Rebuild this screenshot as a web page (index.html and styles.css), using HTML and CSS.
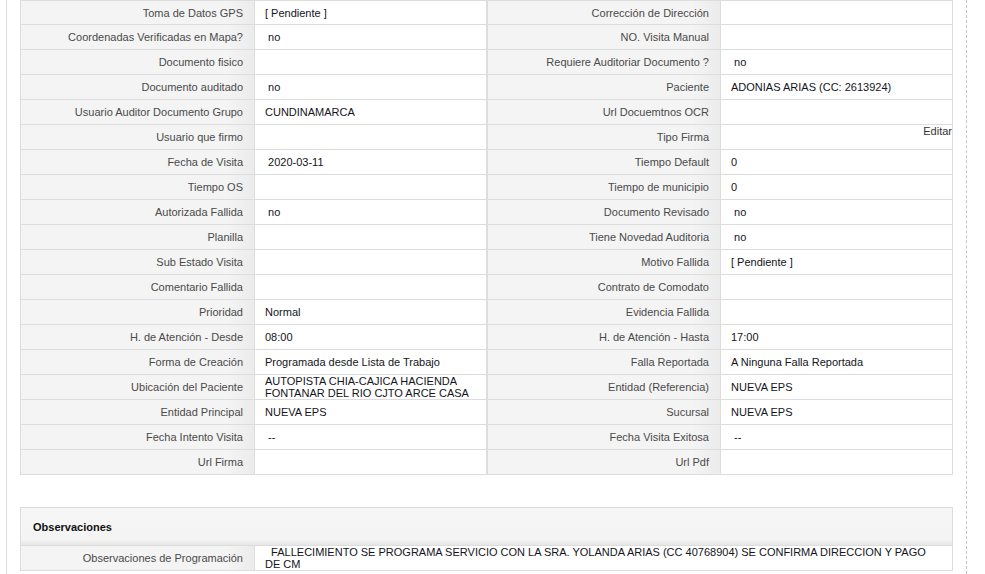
FILE: index.html
```html
<!doctype html>
<html>
	<head>
		<title>Detalle de Visita</title>
		<link rel="stylesheet" href="styles.css">
	</head>

	<body>
		<div class="page">
			<div class="details">
				<div class="label">Toma de Datos GPS</div>
				<div class="value">[ Pendiente ]</div>
				<div class="label">Corrección de Dirección</div>
				<div class="value"></div>

				<div class="label">Coordenadas Verificadas en Mapa?</div>
				<div class="value">&nbsp;no</div>
				<div class="label">NO. Visita Manual</div>
				<div class="value"></div>

				<div class="label">Documento fisico</div>
				<div class="value"></div>
				<div class="label">Requiere Auditoriar Documento ?</div>
				<div class="value">&nbsp;no</div>

				<div class="label">Documento auditado</div>
				<div class="value">&nbsp;no</div>
				<div class="label">Paciente</div>
				<div class="value">ADONIAS ARIAS (CC: 2613924)</div>

				<div class="label">Usuario Auditor Documento Grupo</div>
				<div class="value">CUNDINAMARCA</div>
				<div class="label">Url Docuemtnos OCR</div>
				<div class="value"></div>

				<div class="label">Usuario que firmo</div>
				<div class="value"></div>
				<div class="label">Tipo Firma</div>
				<div class="value value-edit"><a class="edit-link">Editar</a></div>

				<div class="label">Fecha de Visita</div>
				<div class="value">&nbsp;2020-03-11</div>
				<div class="label">Tiempo Default</div>
				<div class="value">0</div>

				<div class="label">Tiempo OS</div>
				<div class="value"></div>
				<div class="label">Tiempo de municipio</div>
				<div class="value">0</div>

				<div class="label">Autorizada Fallida</div>
				<div class="value">&nbsp;no</div>
				<div class="label">Documento Revisado</div>
				<div class="value">&nbsp;no</div>

				<div class="label">Planilla</div>
				<div class="value"></div>
				<div class="label">Tiene Novedad Auditoria</div>
				<div class="value">&nbsp;no</div>

				<div class="label">Sub Estado Visita</div>
				<div class="value"></div>
				<div class="label">Motivo Fallida</div>
				<div class="value">[ Pendiente ]</div>

				<div class="label">Comentario Fallida</div>
				<div class="value"></div>
				<div class="label">Contrato de Comodato</div>
				<div class="value"></div>

				<div class="label">Prioridad</div>
				<div class="value">Normal</div>
				<div class="label">Evidencia Fallida</div>
				<div class="value"></div>

				<div class="label">H. de Atención - Desde</div>
				<div class="value">08:00</div>
				<div class="label">H. de Atención - Hasta</div>
				<div class="value">17:00</div>

				<div class="label">Forma de Creación</div>
				<div class="value">Programada desde Lista de Trabajo</div>
				<div class="label">Falla Reportada</div>
				<div class="value">A Ninguna Falla Reportada</div>

				<div class="label">Ubicación del Paciente</div>
				<div class="value value-multi">AUTOPISTA CHIA-CAJICA HACIENDA FONTANAR DEL RIO CJTO ARCE CASA</div>
				<div class="label">Entidad (Referencia)</div>
				<div class="value">NUEVA EPS</div>

				<div class="label">Entidad Principal</div>
				<div class="value">NUEVA EPS</div>
				<div class="label">Sucursal</div>
				<div class="value">NUEVA EPS</div>

				<div class="label">Fecha Intento Visita</div>
				<div class="value">&nbsp;--</div>
				<div class="label">Fecha Visita Exitosa</div>
				<div class="value">&nbsp;--</div>

				<div class="label">Url Firma</div>
				<div class="value"></div>
				<div class="label">Url Pdf</div>
				<div class="value"></div>
			</div>

			<div class="observaciones">
				<div class="obs-header">Observaciones</div>
				<div class="obs-row">
					<div class="label">Observaciones de Programación</div>
					<div class="value value-multi">&nbsp; FALLECIMIENTO SE PROGRAMA SERVICIO CON LA SRA. YOLANDA ARIAS (CC 40768904) SE CONFIRMA DIRECCION Y PAGO DE CM</div>
				</div>
			</div>
		</div>
	</body>
</html>
```

FILE: styles.css
```css
:root {
	--line: #dddddd;
	--label-bg: #f4f4f4;
	--label-text: #4a4a4a;
	--value-text: #141420;
}

body {
	margin: 0;
	font-family: "Liberation Sans", Arial, sans-serif;
	font-size: 11px;
	background-color: #ffffff;
	color: var(--value-text);
}

.page {
	margin-left: 6px;
	width: 933px;
	min-height: 100vh;
	padding: 0 13px;
	border-left: 1px solid var(--line);
	border-right: 1px dashed #c4c4c4;
}

.details {
	display: grid;
	grid-template-columns: 234px 233px 233px 232px;
	grid-template-rows: 24px;
	grid-auto-rows: 25px;
	border-top: 1px solid var(--line);
	border-left: 1px solid var(--line);
}

.label,
.value {
	display: flex;
	align-items: center;
	box-sizing: border-box;
	border-right: 1px solid var(--line);
	border-bottom: 1px solid var(--line);
	overflow: hidden;
}

.label {
	justify-content: flex-end;
	padding-right: 11px;
	color: var(--label-text);
	text-align: right;
	white-space: nowrap;
	background-color: var(--label-bg);
	background-image: linear-gradient(
		to right,
		rgba(0, 0, 0, 0) 88%,
		rgba(0, 0, 0, 0.035) 100%
	);
}

.value {
	padding-left: 10px;
	padding-right: 10px;
	background-color: #ffffff;
	white-space: nowrap;
}

/* second value column carries the thicker divider */
.details .value:nth-child(4n + 2) {
	border-right-width: 2px;
}

.value-multi {
	white-space: normal;
	line-height: 12px;
}

.value-edit {
	justify-content: flex-end;
	align-items: flex-start;
	padding-right: 0;
}

.edit-link {
	color: #333333;
	line-height: 13px;
	cursor: pointer;
}

.observaciones {
	margin-top: 32px;
	border: 1px solid var(--line);
	border-bottom: none;
}

.obs-header {
	height: 37px;
	padding-left: 12px;
	display: flex;
	align-items: center;
	font-weight: bold;
	color: #111111;
	background: linear-gradient(
		to bottom,
		#f6f6f6 0%,
		#f4f4f4 85%,
		#e6e6e4 100%
	);
	border-bottom: 1px solid var(--line);
}

.obs-row {
	display: grid;
	grid-template-columns: 234px 1fr;
	height: 25px;
}

.obs-row .value {
	border-right: none;
	padding-right: 20px;
}
```
